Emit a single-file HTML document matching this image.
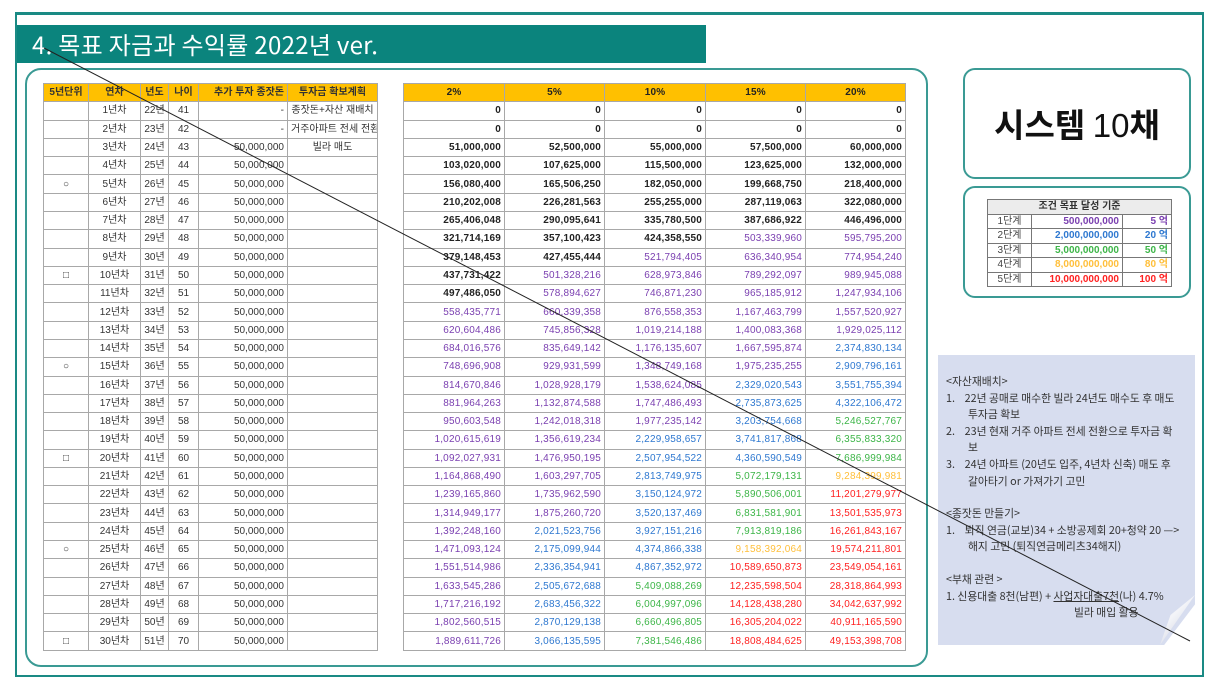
<!DOCTYPE html>
<html><head><meta charset="utf-8">
<style>
*{margin:0;padding:0;box-sizing:border-box}
body{width:1216px;height:684px;background:#fff;position:relative;overflow:hidden;font-family:"Liberation Sans","Noto Sans CJK KR",sans-serif}
.abs{position:absolute}
#frame{left:15px;top:12px;width:1189px;height:665px;border:2px solid #1a8a84;border-top-width:3px}
#title{left:17px;top:25px;width:689px;height:38px;background:#0b847d;color:#fff;font-size:24px;line-height:38px;padding-left:15px;font-family:"Noto Sans CJK KR",sans-serif;font-weight:400;letter-spacing:0.3px}
#panel{left:25px;top:68px;width:903px;height:599px;border:2px solid #3a9a94;border-radius:16px}
table{border-collapse:collapse;table-layout:fixed;position:absolute;font-size:10px;font-family:"Liberation Sans","Noto Sans CJK KR",sans-serif}
td{border:1px solid #a8a8a8;white-space:nowrap;overflow:hidden;padding:0 3px;line-height:15px}
tr.h td{background:#ffc000;font-weight:bold;text-align:center;color:#222}
#lt td{text-align:center;color:#333}
#lt td:nth-child(5){text-align:right}
#rt td{text-align:right;font-weight:bold;color:#222;letter-spacing:0.2px}
#rt td.p{color:#7a3fb0;font-weight:normal}
#rt td.b{color:#2e78d0;font-weight:normal}
#rt td.g{color:#3db548;font-weight:normal}
#rt td.o{color:#ffbf3a;font-weight:normal}
#rt td.r{color:#ff2020;font-weight:normal}
#b1{left:963px;top:68px;width:228px;height:111px;border:2px solid #3a9a94;border-radius:12px;text-align:center;font-size:33px;font-weight:bold;line-height:107px;font-family:"Noto Sans CJK KR",sans-serif;color:#111}
#b1 span{font-weight:normal;font-family:"Liberation Sans",sans-serif}
#b2{left:963px;top:186px;width:228px;height:112px;border:2px solid #3a9a94;border-radius:12px}
#gt{left:987px;top:199px;font-size:10px}
#gt td{line-height:13.5px;padding:0 3px;border-color:#777}
#note{left:938px;top:355px;width:257px;height:290px;background:#d7ddef;clip-path:polygon(0 0,100% 0,100% 86%,88% 100%,0 100%);font-size:10.8px;color:#333;padding:18px 14px 0 8px;line-height:16.6px;font-family:"Noto Sans CJK KR",sans-serif}
#note .i{padding-left:22px;text-indent:-22px}
#fold{left:1160px;top:595px;width:35px;height:50px;background:linear-gradient(135deg,#f3f4f8 40%,#c3c8da);clip-path:polygon(100% 0,0 100%,30% 40%)}
</style></head><body>
<div class="abs" id="frame"></div>
<div class="abs" id="title">4. 목표 자금과 수익률 2022년 ver.</div>
<div class="abs" id="panel"></div>

<table id="lt" style="left:43px;top:83px;width:334px;height:568px">
<colgroup><col style="width:45px"><col style="width:52px"><col style="width:28px"><col style="width:30px"><col style="width:89px"><col style="width:90px"></colgroup>
<tr class="h"><td>5년단위</td><td>연차</td><td>년도</td><td>나이</td><td>추가 투자 종잣돈</td><td>투자금 확보계획</td></tr>
<tr><td></td><td>1년차</td><td>22년</td><td>41</td><td>-</td><td>종잣돈+자산 재배치</td></tr>
<tr><td></td><td>2년차</td><td>23년</td><td>42</td><td>-</td><td>거주아파트 전세 전환</td></tr>
<tr><td></td><td>3년차</td><td>24년</td><td>43</td><td>50,000,000</td><td>빌라 매도</td></tr>
<tr><td></td><td>4년차</td><td>25년</td><td>44</td><td>50,000,000</td><td></td></tr>
<tr><td>○</td><td>5년차</td><td>26년</td><td>45</td><td>50,000,000</td><td></td></tr>
<tr><td></td><td>6년차</td><td>27년</td><td>46</td><td>50,000,000</td><td></td></tr>
<tr><td></td><td>7년차</td><td>28년</td><td>47</td><td>50,000,000</td><td></td></tr>
<tr><td></td><td>8년차</td><td>29년</td><td>48</td><td>50,000,000</td><td></td></tr>
<tr><td></td><td>9년차</td><td>30년</td><td>49</td><td>50,000,000</td><td></td></tr>
<tr><td>□</td><td>10년차</td><td>31년</td><td>50</td><td>50,000,000</td><td></td></tr>
<tr><td></td><td>11년차</td><td>32년</td><td>51</td><td>50,000,000</td><td></td></tr>
<tr><td></td><td>12년차</td><td>33년</td><td>52</td><td>50,000,000</td><td></td></tr>
<tr><td></td><td>13년차</td><td>34년</td><td>53</td><td>50,000,000</td><td></td></tr>
<tr><td></td><td>14년차</td><td>35년</td><td>54</td><td>50,000,000</td><td></td></tr>
<tr><td>○</td><td>15년차</td><td>36년</td><td>55</td><td>50,000,000</td><td></td></tr>
<tr><td></td><td>16년차</td><td>37년</td><td>56</td><td>50,000,000</td><td></td></tr>
<tr><td></td><td>17년차</td><td>38년</td><td>57</td><td>50,000,000</td><td></td></tr>
<tr><td></td><td>18년차</td><td>39년</td><td>58</td><td>50,000,000</td><td></td></tr>
<tr><td></td><td>19년차</td><td>40년</td><td>59</td><td>50,000,000</td><td></td></tr>
<tr><td>□</td><td>20년차</td><td>41년</td><td>60</td><td>50,000,000</td><td></td></tr>
<tr><td></td><td>21년차</td><td>42년</td><td>61</td><td>50,000,000</td><td></td></tr>
<tr><td></td><td>22년차</td><td>43년</td><td>62</td><td>50,000,000</td><td></td></tr>
<tr><td></td><td>23년차</td><td>44년</td><td>63</td><td>50,000,000</td><td></td></tr>
<tr><td></td><td>24년차</td><td>45년</td><td>64</td><td>50,000,000</td><td></td></tr>
<tr><td>○</td><td>25년차</td><td>46년</td><td>65</td><td>50,000,000</td><td></td></tr>
<tr><td></td><td>26년차</td><td>47년</td><td>66</td><td>50,000,000</td><td></td></tr>
<tr><td></td><td>27년차</td><td>48년</td><td>67</td><td>50,000,000</td><td></td></tr>
<tr><td></td><td>28년차</td><td>49년</td><td>68</td><td>50,000,000</td><td></td></tr>
<tr><td></td><td>29년차</td><td>50년</td><td>69</td><td>50,000,000</td><td></td></tr>
<tr><td>□</td><td>30년차</td><td>51년</td><td>70</td><td>50,000,000</td><td></td></tr>
</table>

<table id="rt" style="left:403px;top:83px;width:502px;height:568px">
<colgroup><col style="width:101px"><col style="width:100px"><col style="width:101px"><col style="width:100px"><col style="width:100px"></colgroup>
<tr class="h"><td style="text-align:center">2%</td><td style="text-align:center">5%</td><td style="text-align:center">10%</td><td style="text-align:center">15%</td><td style="text-align:center">20%</td></tr>
<tr><td>0</td><td>0</td><td>0</td><td>0</td><td>0</td></tr>
<tr><td>0</td><td>0</td><td>0</td><td>0</td><td>0</td></tr>
<tr><td>51,000,000</td><td>52,500,000</td><td>55,000,000</td><td>57,500,000</td><td>60,000,000</td></tr>
<tr><td>103,020,000</td><td>107,625,000</td><td>115,500,000</td><td>123,625,000</td><td>132,000,000</td></tr>
<tr><td>156,080,400</td><td>165,506,250</td><td>182,050,000</td><td>199,668,750</td><td>218,400,000</td></tr>
<tr><td>210,202,008</td><td>226,281,563</td><td>255,255,000</td><td>287,119,063</td><td>322,080,000</td></tr>
<tr><td>265,406,048</td><td>290,095,641</td><td>335,780,500</td><td>387,686,922</td><td>446,496,000</td></tr>
<tr><td>321,714,169</td><td>357,100,423</td><td>424,358,550</td><td class="p">503,339,960</td><td class="p">595,795,200</td></tr>
<tr><td>379,148,453</td><td>427,455,444</td><td class="p">521,794,405</td><td class="p">636,340,954</td><td class="p">774,954,240</td></tr>
<tr><td>437,731,422</td><td class="p">501,328,216</td><td class="p">628,973,846</td><td class="p">789,292,097</td><td class="p">989,945,088</td></tr>
<tr><td>497,486,050</td><td class="p">578,894,627</td><td class="p">746,871,230</td><td class="p">965,185,912</td><td class="p">1,247,934,106</td></tr>
<tr><td class="p">558,435,771</td><td class="p">660,339,358</td><td class="p">876,558,353</td><td class="p">1,167,463,799</td><td class="p">1,557,520,927</td></tr>
<tr><td class="p">620,604,486</td><td class="p">745,856,328</td><td class="p">1,019,214,188</td><td class="p">1,400,083,368</td><td class="p">1,929,025,112</td></tr>
<tr><td class="p">684,016,576</td><td class="p">835,649,142</td><td class="p">1,176,135,607</td><td class="p">1,667,595,874</td><td class="b">2,374,830,134</td></tr>
<tr><td class="p">748,696,908</td><td class="p">929,931,599</td><td class="p">1,348,749,168</td><td class="p">1,975,235,255</td><td class="b">2,909,796,161</td></tr>
<tr><td class="p">814,670,846</td><td class="p">1,028,928,179</td><td class="p">1,538,624,085</td><td class="b">2,329,020,543</td><td class="b">3,551,755,394</td></tr>
<tr><td class="p">881,964,263</td><td class="p">1,132,874,588</td><td class="p">1,747,486,493</td><td class="b">2,735,873,625</td><td class="b">4,322,106,472</td></tr>
<tr><td class="p">950,603,548</td><td class="p">1,242,018,318</td><td class="p">1,977,235,142</td><td class="b">3,203,754,668</td><td class="g">5,246,527,767</td></tr>
<tr><td class="p">1,020,615,619</td><td class="p">1,356,619,234</td><td class="b">2,229,958,657</td><td class="b">3,741,817,868</td><td class="g">6,355,833,320</td></tr>
<tr><td class="p">1,092,027,931</td><td class="p">1,476,950,195</td><td class="b">2,507,954,522</td><td class="b">4,360,590,549</td><td class="g">7,686,999,984</td></tr>
<tr><td class="p">1,164,868,490</td><td class="p">1,603,297,705</td><td class="b">2,813,749,975</td><td class="g">5,072,179,131</td><td class="o">9,284,399,981</td></tr>
<tr><td class="p">1,239,165,860</td><td class="p">1,735,962,590</td><td class="b">3,150,124,972</td><td class="g">5,890,506,001</td><td class="r">11,201,279,977</td></tr>
<tr><td class="p">1,314,949,177</td><td class="p">1,875,260,720</td><td class="b">3,520,137,469</td><td class="g">6,831,581,901</td><td class="r">13,501,535,973</td></tr>
<tr><td class="p">1,392,248,160</td><td class="b">2,021,523,756</td><td class="b">3,927,151,216</td><td class="g">7,913,819,186</td><td class="r">16,261,843,167</td></tr>
<tr><td class="p">1,471,093,124</td><td class="b">2,175,099,944</td><td class="b">4,374,866,338</td><td class="o">9,158,392,064</td><td class="r">19,574,211,801</td></tr>
<tr><td class="p">1,551,514,986</td><td class="b">2,336,354,941</td><td class="b">4,867,352,972</td><td class="r">10,589,650,873</td><td class="r">23,549,054,161</td></tr>
<tr><td class="p">1,633,545,286</td><td class="b">2,505,672,688</td><td class="g">5,409,088,269</td><td class="r">12,235,598,504</td><td class="r">28,318,864,993</td></tr>
<tr><td class="p">1,717,216,192</td><td class="b">2,683,456,322</td><td class="g">6,004,997,096</td><td class="r">14,128,438,280</td><td class="r">34,042,637,992</td></tr>
<tr><td class="p">1,802,560,515</td><td class="b">2,870,129,138</td><td class="g">6,660,496,805</td><td class="r">16,305,204,022</td><td class="r">40,911,165,590</td></tr>
<tr><td class="p">1,889,611,726</td><td class="b">3,066,135,595</td><td class="g">7,381,546,486</td><td class="r">18,808,484,625</td><td class="r">49,153,398,708</td></tr>
</table>

<div class="abs" id="b1">시스템 <span>10</span>채</div>
<div class="abs" id="b2"></div>
<table id="gt" style="width:184px">
<colgroup><col style="width:44px"><col style="width:91px"><col style="width:49px"></colgroup>
<tr><td colspan="3" style="background:#ececec;text-align:center;font-weight:bold;color:#333">조건 목표 달성 기준</td></tr>
<tr><td style="text-align:center;color:#444">1단계</td><td style="text-align:right;color:#7a3fb0;font-weight:bold">500,000,000</td><td style="text-align:right;color:#7a3fb0;font-weight:bold">5 억</td></tr>
<tr><td style="text-align:center;color:#444">2단계</td><td style="text-align:right;color:#2e78d0;font-weight:bold">2,000,000,000</td><td style="text-align:right;color:#2e78d0;font-weight:bold">20 억</td></tr>
<tr><td style="text-align:center;color:#444">3단계</td><td style="text-align:right;color:#3db548;font-weight:bold">5,000,000,000</td><td style="text-align:right;color:#3db548;font-weight:bold">50 억</td></tr>
<tr><td style="text-align:center;color:#444">4단계</td><td style="text-align:right;color:#ffbf3a;font-weight:bold">8,000,000,000</td><td style="text-align:right;color:#ffbf3a;font-weight:bold">80 억</td></tr>
<tr><td style="text-align:center;color:#444">5단계</td><td style="text-align:right;color:#ff2020;font-weight:bold">10,000,000,000</td><td style="text-align:right;color:#ff2020;font-weight:bold">100 억</td></tr>
</table>

<div class="abs" id="note">
<div>&lt;자산재배치&gt;</div>
<div class="i">1.&nbsp;&nbsp;&nbsp; 22년 공매로 매수한 빌라 24년도 매수도 후 매도 투자금 확보</div>
<div class="i">2.&nbsp;&nbsp;&nbsp; 23년 현재 거주 아파트 전세 전환으로 투자금 확보</div>
<div class="i">3.&nbsp;&nbsp;&nbsp; 24년 아파트 (20년도 입주, 4년차 신축) 매도 후 갈아타기 or 가져가기 고민</div>
<div style="height:16px"></div>
<div>&lt;종잣돈 만들기&gt;</div>
<div class="i">1.&nbsp;&nbsp;&nbsp; 퇴직 연금(교보)34 + 소방공제회 20+청약 20 —&gt; 해지 고민 (퇴직연금메리츠34해지)</div>
<div style="height:16px"></div>
<div>&lt;부채 관련 &gt;</div>
<div style="white-space:nowrap">1. 신용대출 8천(남편) + <u>사업자대출7천</u>(나) 4.7%</div>
<div style="padding-left:128px">빌라 매입 활용</div>
</div>
<div class="abs" id="fold"></div>

<svg class="abs" style="left:0;top:0" width="1216" height="684"><line x1="44" y1="48" x2="1190" y2="641" stroke="#222" stroke-width="1"/></svg>
</body></html>
